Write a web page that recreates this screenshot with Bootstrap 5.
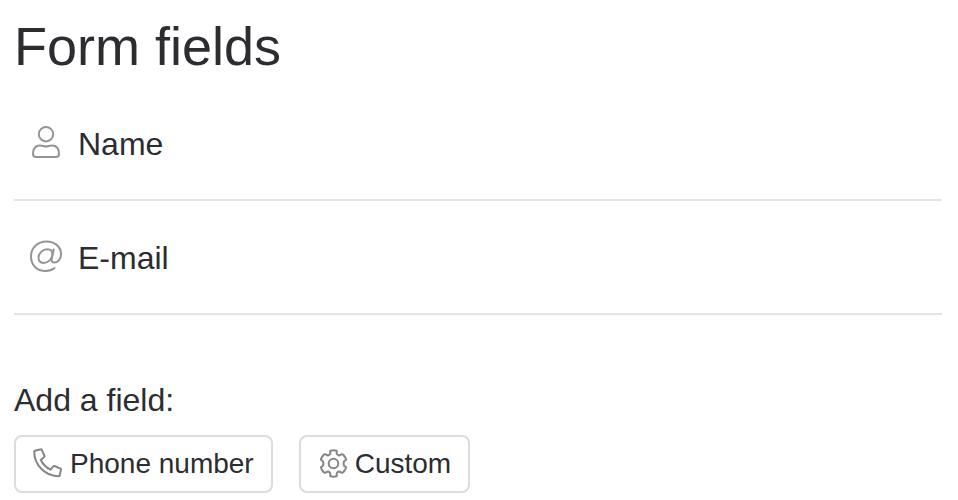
<!DOCTYPE html>
<html lang="en">
<head>
<meta charset="utf-8">
<meta name="viewport" content="width=device-width, initial-scale=1">
<title>Form fields</title>
<link href="https://cdn.jsdelivr.net/npm/bootstrap@5.3.0/dist/css/bootstrap.min.css" rel="stylesheet">
<style>
  body { font-family: "Liberation Sans", Arial, sans-serif; font-size: 32px; line-height: 40px; color: #2c2c31; background: #fff; }
  .panel { padding: 14px 16px 0 14px; }
  .panel-title { font-size: 54px; line-height: 64px; font-weight: 400; margin-bottom: 9px; }
  .field-row { border-bottom: 2px solid #e4e4e4; height: 114px; padding: 2px 16px 0; gap: 16px; }
  .field-icon { width: 32px; height: 32px; flex: none; }
  .glyph { fill: none; stroke: #949494; stroke-width: 2; stroke-linejoin: round; stroke-linecap: round; overflow: visible; }
  .add-block { margin-top: 65px; }
  .add-actions { gap: 26px; margin-top: 15px; }
  .btn-field { --bs-btn-color: #2c2c31; --bs-btn-border-color: #dcdcdc; --bs-btn-hover-bg: #f6f6f6; --bs-btn-hover-border-color: #ccc; --bs-btn-border-width: 2px; --bs-btn-border-radius: 8px; --bs-btn-font-size: 28px; --bs-btn-line-height: 38px; --bs-btn-padding-y: 8px; --bs-btn-padding-x: 17px; gap: 5px; }
  .btn-field .glyph { width: 32px; height: 32px; stroke: #868686; }
</style>
<script src="https://cdn.jsdelivr.net/npm/bootstrap@5.3.0/dist/js/bootstrap.bundle.min.js" defer></script>
</head>
<body>
<main class="panel">
  <h1 class="panel-title">Form fields</h1>
  <ul class="list-unstyled mb-0">
    <li class="field-row d-flex align-items-center">
      <svg class="field-icon glyph" viewBox="0 1 32 32" aria-hidden="true">
        <circle cx="16" cy="7.200" r="7.200"/>
        <path d="M3 27C3 21.500 5.500 18.500 10 18.500C13 18.500 13.500 19.500 16 19.500C18.500 19.500 19 18.500 22 18.500C26.500 18.500 29 21.500 29 27Q29 30 26 30H6Q3 30 3 27Z"/>
      </svg>
      <span>Name</span>
    </li>
    <li class="field-row d-flex align-items-center">
      <svg class="field-icon glyph" viewBox="0 1 32 32" aria-hidden="true">
        <path d="M24.500 27C22 29 19 30 15.500 30C7 30 1 24 1 15.500C1 7 7.500 0.500 16.500 0.500C25 0.500 31 6 31 13C31 18 28 21.600 24.500 21.600C22 21.600 21.300 20 21.800 17.500L23.700 8.500"/>
        <path d="M22.500 13.500C22.500 10 20.500 8.200 17.500 8.200C12.500 8.200 8.500 12.500 8.500 16.800C8.500 20 10.500 21.900 13.500 21.900C18.500 21.900 22 18 22.500 13.500Z"/>
      </svg>
      <span>E-mail</span>
    </li>
  </ul>
  <section class="add-block">
    <p class="mb-0">Add a field:</p>
    <div class="add-actions d-flex flex-wrap">
      <button type="button" class="btn btn-field d-inline-flex align-items-center">
        <svg class="glyph" viewBox="0 0 32 32" aria-hidden="true">
          <path d="M2 2.800L7.800 1.300Q8.500 1.100 8.800 1.800L11.500 7.900Q11.700 8.600 11.200 9.100L7.800 12C9.800 16.200 13 19.400 17.500 21.700L20.300 18.300Q20.800 17.700 21.500 18L27.500 20.600Q28.200 20.900 28 21.600L26.700 27.400Q26.500 28.200 25.700 28.200C12.500 28.200 1.200 17 1.200 3.700Q1.200 3 2 2.800Z"/>
        </svg>
        <span>Phone number</span>
      </button>
      <button type="button" class="btn btn-field d-inline-flex align-items-center">
        <svg class="glyph" viewBox="0 0 32 32" aria-hidden="true">
          <circle cx="15.500" cy="15.500" r="4.800"/>
          <path d="M12.300 2.700Q15.500 2 18.700 2.700V5.700Q19.500 7 21 7.500L23.500 6.300Q24.600 6 25.500 7Q27.500 9.200 28.200 11.700L26 13.300Q25.200 15.500 26 17.700L28.200 19.300Q27.500 21.800 25.500 24Q24.600 25 23.500 24.700L21 23.500Q19.500 24 18.700 25.300V28.300Q15.500 29 12.300 28.300V25.300Q11.500 24 10 23.500L7.500 24.700Q6.400 25 5.500 24Q3.500 21.800 2.800 19.300L5 17.700Q5.800 15.500 5 13.300L2.800 11.700Q3.500 9.200 5.500 7Q6.400 6 7.500 6.300L10 7.500Q11.500 7 12.300 5.700Z"/>
        </svg>
        <span>Custom</span>
      </button>
    </div>
  </section>
</main>
</body>
</html>
